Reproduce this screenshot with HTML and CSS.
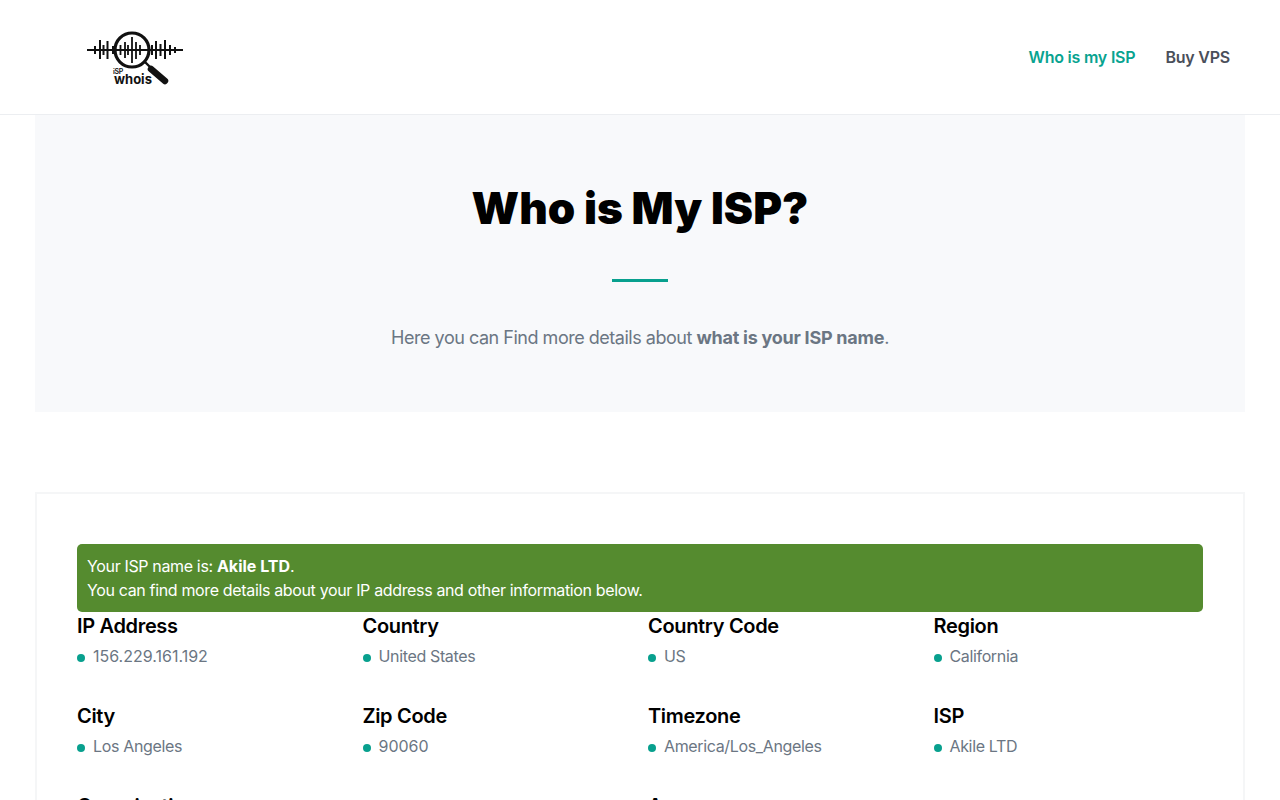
FILE: index.html
```html
<!DOCTYPE html>
<html lang="en">
<head>
  <meta charset="UTF-8">
  <title>Who is My ISP?</title>
  <link rel="stylesheet" href="styles.css">
</head>
<body>
<header class="header">
  <a class="logo" href="#">
    <svg class="logo-mark" width="98" height="56" viewBox="0 0 98 56" fill="none" stroke="#111">
      <!-- sound wave -->
      <path d="M1 20H97" stroke-width="1.8"/>
      <path d="M9 16v8M14 10v19M17.500 15v10M21.500 11v18M27 16v8M66 15v10M70 11v18M74.500 14v12M79 10v19M84 15v10M89 17v6" stroke-width="2"/>
      <path d="M34.500 15v10M39 12v16M42 15v10M46 7v26M50 12v17M54 15v10" stroke-width="1.8"/>
      <!-- magnifier -->
      <circle cx="46" cy="20" r="17" stroke-width="3.200"/>
      <path d="M59 32l5 5" stroke-width="2.400"/>
      <path d="M65 39l14 12" stroke-width="6.500" stroke-linecap="round"/>
      <text class="logo-isp" x="27" y="44">iSP</text>
      <text class="logo-whois" x="28" y="54">whois</text>
    </svg>
  </a>
  <nav class="nav">
    <a class="nav-link active" href="#">Who is my ISP</a>
    <a class="nav-link" href="#">Buy VPS</a>
  </nav>
</header>

<section class="hero">
  <h1>Who is My ISP?</h1>
  <div class="hero-line"></div>
  <p>Here you can Find more details about <strong>what is your ISP name</strong>.</p>
</section>

<section class="card">
  <div class="alert">
    Your ISP name is: <strong>Akile LTD</strong>.<br>
    You can find more details about your IP address and other information below.
  </div>
  <div class="details">
    <div class="item">
      <h4>IP Address</h4>
      <p class="num">156.229.161.192</p>
    </div>
    <div class="item">
      <h4>Country</h4>
      <p>United States</p>
    </div>
    <div class="item">
      <h4>Country Code</h4>
      <p>US</p>
    </div>
    <div class="item">
      <h4>Region</h4>
      <p>California</p>
    </div>
    <div class="item">
      <h4>City</h4>
      <p>Los Angeles</p>
    </div>
    <div class="item">
      <h4>Zip Code</h4>
      <p class="num">90060</p>
    </div>
    <div class="item">
      <h4>Timezone</h4>
      <p>America/Los_Angeles</p>
    </div>
    <div class="item">
      <h4>ISP</h4>
      <p>Akile LTD</p>
    </div>
    <div class="item wide">
      <h4>Organization</h4>
      <p>Akile LTD</p>
    </div>
    <div class="item wide">
      <h4>As</h4>
      <p>AS61112 Akile LTD</p>
    </div>
  </div>
</section>
</body>
</html>
```

FILE: styles.css
```css
* {
  box-sizing: border-box;
}

body {
  margin: 0;
  background: #fff;
  font-family: 'Inter', sans-serif;
  font-size: 16px;
  letter-spacing: -0.35px;
  color: #6b7683;
}

.header {
  height: 115px;
  padding: 0 50px 0 86px;
  display: flex;
  align-items: center;
  justify-content: space-between;
  border-bottom: 1px solid #eceef1;
}

.logo {
  display: block;
  height: 56px;
  margin-top: -1px;
}

.logo-mark {
  display: block;
  margin-top: 1px;
}

.logo-isp {
  font-size: 7px;
  font-weight: 600;
  fill: #111;
  stroke: none;
}

.logo-whois {
  font-size: 13px;
  font-weight: 700;
  letter-spacing: 0;
  fill: #111;
  stroke: none;
}

.nav {
  display: flex;
  gap: 30px;
}

.nav-link {
  font-size: 16px;
  font-weight: 600;
  letter-spacing: -0.22px;
  color: #4a4f5a;
  text-decoration: none;
}

.nav-link.active {
  color: #08a390;
}

.hero {
  width: 1210px;
  height: 297px;
  margin: 0 auto;
  padding-top: 64px;
  background: #f8f9fb;
  text-align: center;
}

.hero h1 {
  margin: 0;
  font-size: 44px;
  line-height: 58px;
  font-weight: 900;
  letter-spacing: 0;
  color: #000;
}

.hero-line {
  width: 56px;
  height: 3px;
  margin: 42px auto 0;
  background: #08a08e;
}

.hero p {
  margin: 42px 0 0;
  font-size: 18px;
  line-height: 27px;
  letter-spacing: -0.48px;
}

.hero strong {
  letter-spacing: -0.25px;
}

.card {
  width: 1210px;
  margin: 80px auto 40px;
  padding: 50px 40px 40px;
  border: 2px solid #f5f6f7;
}

.alert {
  padding: 10px;
  background: #558b2f;
  border-radius: 5px;
  color: #fff;
  line-height: 24px;
}

.alert strong {
  letter-spacing: 0;
}

.details {
  display: grid;
  grid-template-columns: repeat(4, 1fr);
  margin-right: -16px;
}

.item {
  height: 90px;
}

.item.wide {
  grid-column: span 2;
}

.item h4 {
  margin: 0;
  padding-top: 1px;
  font-size: 20px;
  line-height: 27px;
  font-weight: 600;
  letter-spacing: -0.33px;
  color: #000;
}

.item p {
  margin: 4px 0 0;
  font-size: 16px;
  line-height: 24px;
  display: flex;
  align-items: center;
}

.item p.num {
  letter-spacing: 0;
}

.item p::before {
  content: "";
  width: 8px;
  height: 8px;
  margin: 3px 8px 0 0;
  border-radius: 50%;
  background: #08a08e;
}
```
